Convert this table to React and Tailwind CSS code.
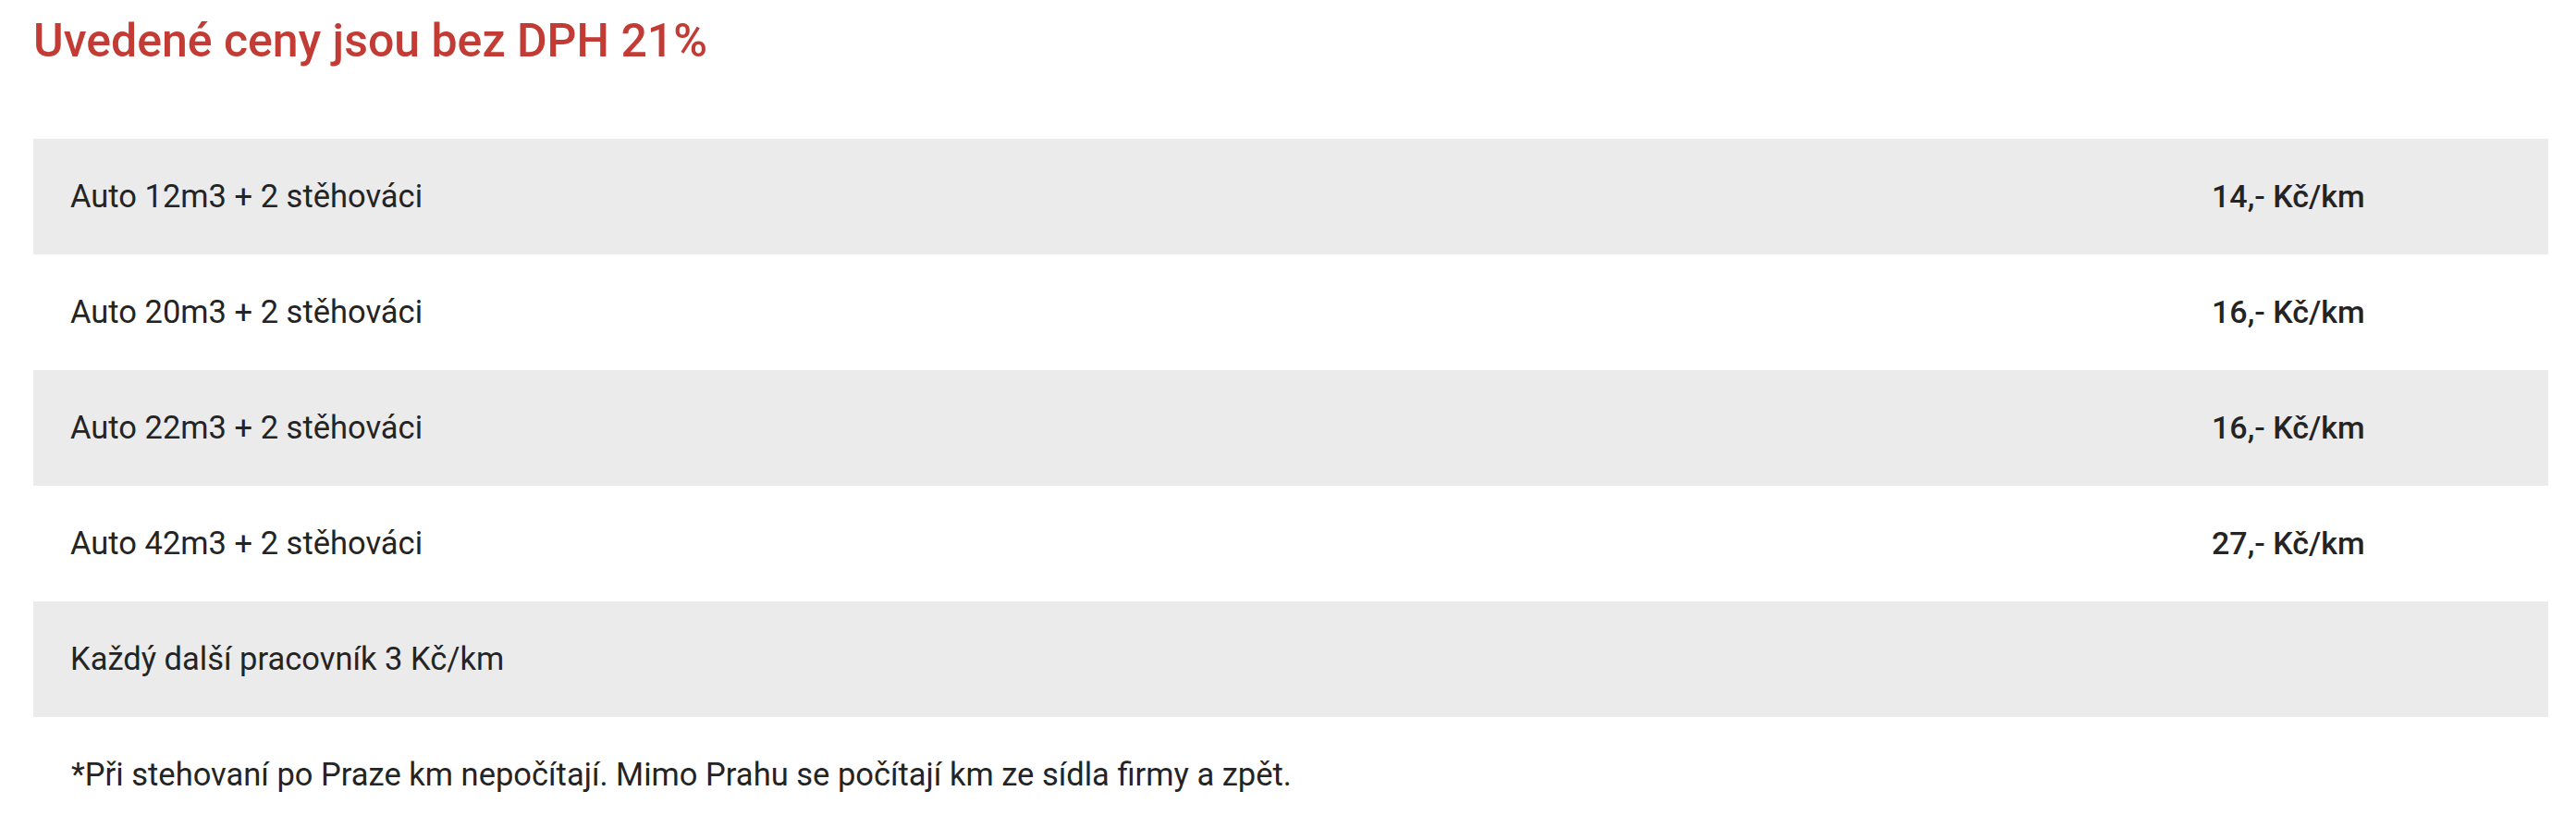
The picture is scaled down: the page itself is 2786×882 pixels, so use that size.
import React from "react";

const rows = [
  ["Auto 12m3 + 2 stěhováci", "14,- Kč/km"],
  ["Auto 20m3 + 2 stěhováci", "16,- Kč/km"],
  ["Auto 22m3 + 2 stěhováci", "16,- Kč/km"],
  ["Auto 42m3 + 2 stěhováci", "27,- Kč/km"],
  ["Každý další pracovník 3 Kč/km", ""],
];

export default function App() {
  return (
    <div className="bg-white w-[2786px] h-[882px] overflow-hidden px-[36px] text-[#242424]" style={{ fontFamily: "Roboto, 'Liberation Sans', sans-serif" }}>
      <h2 className="h-[150px] pt-[15px] text-[50px] leading-[58px] font-medium text-[#c23b34]">Uvedené ceny jsou bez DPH 21%</h2>
      <div className="w-[2720px]">
        {rows.map(([a, b], i) => (
          <div key={i} className={`grid grid-cols-[2356px_1fr] h-[125px] items-center text-[34.5px] ${i % 2 === 0 ? "bg-[#ebebeb]" : "bg-white"}`}>
            <div className="pl-[40px]">{a}</div>
            <div className="text-[34px] font-medium">{b}</div>
          </div>
        ))}
        <div className="h-[125px] flex items-center pl-[41px] text-[34.5px]">*Při stehovaní po Praze km nepočítají. Mimo Prahu se počítají km ze sídla firmy a zpět.</div>
      </div>
    </div>
  );
}
